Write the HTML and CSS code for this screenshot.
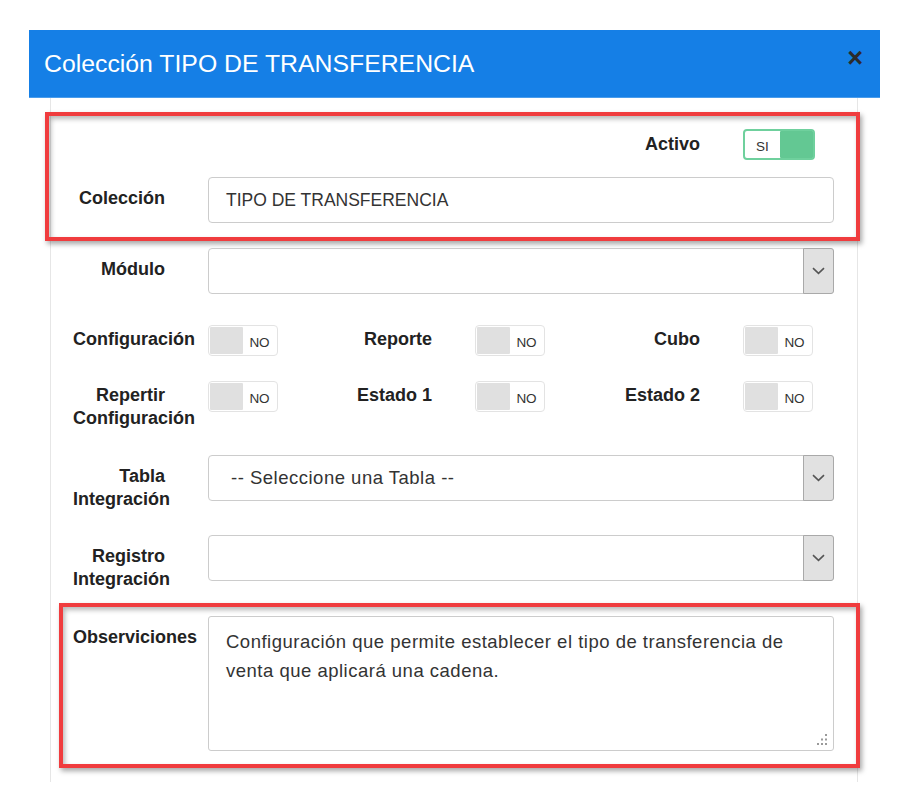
FILE: index.html
```html
<!DOCTYPE html>
<html lang="es">
<head>
<meta charset="utf-8">
<title>Colección TIPO DE TRANSFERENCIA</title>
<link rel="stylesheet" href="styles.css">
</head>
<body>
<div class="modal">
  <div class="modal-header">
    <h1 class="modal-title">Colección TIPO DE TRANSFERENCIA</h1>
    <span class="close">×</span>
  </div>
  <div class="modal-body">
    <div class="highlight highlight-top">
      <div class="toggle-row row-activo">
        <div class="cell"></div>
        <div class="cell"></div>
        <div class="cell">
          <label class="label label-toggle label-activo">Activo</label>
          <div class="toggle toggle-on"><span class="toggle-text">SI</span><span class="knob knob-on"></span></div>
        </div>
      </div>
      <div class="form-row row-coleccion">
        <label class="label">Colección</label>
        <div class="input">TIPO DE TRANSFERENCIA</div>
      </div>
    </div>

    <div class="form-row row-modulo">
      <label class="label">Módulo</label>
      <div class="input select">
        <span class="select-text"></span>
        <span class="select-arrow"><svg width="13" height="8" viewBox="0 0 13 8"><path d="M1 1.2 L6.5 6.4 L12 1.2" fill="none" stroke="#555" stroke-width="1.6"/></svg></span>
      </div>
    </div>

    <div class="toggle-row row-t1">
      <div class="cell">
        <label class="label label-toggle">Configuración</label>
        <div class="toggle"><span class="knob"></span><span class="toggle-text">NO</span></div>
      </div>
      <div class="cell">
        <label class="label label-toggle">Reporte</label>
        <div class="toggle"><span class="knob"></span><span class="toggle-text">NO</span></div>
      </div>
      <div class="cell">
        <label class="label label-toggle">Cubo</label>
        <div class="toggle"><span class="knob"></span><span class="toggle-text">NO</span></div>
      </div>
    </div>

    <div class="toggle-row row-t2">
      <div class="cell">
        <label class="label label-toggle">Repertir Configuración</label>
        <div class="toggle"><span class="knob"></span><span class="toggle-text">NO</span></div>
      </div>
      <div class="cell">
        <label class="label label-toggle">Estado 1</label>
        <div class="toggle"><span class="knob"></span><span class="toggle-text">NO</span></div>
      </div>
      <div class="cell">
        <label class="label label-toggle">Estado 2</label>
        <div class="toggle"><span class="knob"></span><span class="toggle-text">NO</span></div>
      </div>
    </div>

    <div class="form-row row-tabla">
      <label class="label">Tabla Integración</label>
      <div class="input select">
        <span class="select-text">-- Seleccione una Tabla --</span>
        <span class="select-arrow"><svg width="13" height="8" viewBox="0 0 13 8"><path d="M1 1.2 L6.5 6.4 L12 1.2" fill="none" stroke="#555" stroke-width="1.6"/></svg></span>
      </div>
    </div>

    <div class="form-row row-registro">
      <label class="label">Registro Integración</label>
      <div class="input select">
        <span class="select-text"></span>
        <span class="select-arrow"><svg width="13" height="8" viewBox="0 0 13 8"><path d="M1 1.2 L6.5 6.4 L12 1.2" fill="none" stroke="#555" stroke-width="1.6"/></svg></span>
      </div>
    </div>

    <div class="highlight highlight-bottom">
      <div class="form-row row-obs">
        <label class="label">Observiciones</label>
        <div class="textarea">Configuración que permite establecer el tipo de transferencia de<br>venta que aplicará una cadena.
          <svg class="grip" width="12" height="12" viewBox="0 0 12 12">
            <rect x="9" y="0" width="2" height="2" fill="#9a9a9a"/>
            <rect x="5" y="4.5" width="2" height="2" fill="#9a9a9a"/>
            <rect x="9" y="4.5" width="2" height="2" fill="#9a9a9a"/>
            <rect x="1" y="9" width="2" height="2" fill="#9a9a9a"/>
            <rect x="5" y="9" width="2" height="2" fill="#9a9a9a"/>
            <rect x="9" y="9" width="2" height="2" fill="#9a9a9a"/>
          </svg>
        </div>
      </div>
    </div>
  </div>
</div>
</body>
</html>
```

FILE: styles.css
```css
* { box-sizing: border-box; }

html, body {
  margin: 0;
  padding: 0;
  background: #ffffff;
  font-family: "Liberation Sans", Arial, sans-serif;
  color: #333;
}

.modal {
  margin: 30px 0 0 29px;
  width: 851px;
}

.modal-header {
  height: 68px;
  background: #157fe6;
  border-bottom: 1px solid #4a9ceb;
  display: flex;
  align-items: center;
  justify-content: space-between;
  padding: 0 17px 0 15px;
}

.modal-title {
  margin: 0;
  font-weight: normal;
  font-size: 24.8px;
  color: #ffffff;
  line-height: 1;
  padding-top: 1px;
}

.close {
  font-size: 27px;
  font-weight: bold;
  color: #2b2b2b;
  line-height: 1;
  margin-top: -10px;
}

.modal-body {
  margin-left: 21px;
  width: 808px;
  border-left: 1px solid #e6e6e6;
  border-right: 1px solid #e6e6e6;
  padding-top: 14px;
  padding-bottom: 14px;
}

.highlight {
  border: 4px solid #f03c3e;
  box-shadow: 2px 3px 5px rgba(0, 0, 0, 0.35), inset 2px 3px 5px rgba(0, 0, 0, 0.28);
}

.highlight-top {
  margin: 0 -3px 0 -6px;
  padding: 13px 0 14px 24px;
}

.highlight-bottom {
  margin: 12px -3px 0 8px;
  padding: 9px 0 13px 10px;
}

.form-row {
  display: grid;
  grid-template-columns: 92px 626px;
  column-gap: 43px;
  align-items: start;
  padding-left: 22px;
}

.highlight .form-row { padding-left: 0; }

.row-coleccion { margin-top: 17px; }
.row-modulo { margin-top: 7px; }
.row-tabla { margin-top: 25px; }
.row-registro { margin-top: 24px; }

.label {
  display: block;
  font-weight: bold;
  font-size: 18px;
  line-height: 23px;
  color: #222;
  text-align: right;
  padding-top: 10px;
}

.label-toggle { padding-top: 3px; }
.label-activo { padding-top: 4px; }

.input {
  height: 46px;
  border: 1px solid #cccccc;
  border-radius: 4px;
  font-size: 17.5px;
  color: #333;
  display: flex;
  align-items: center;
  padding-left: 17px;
}

.select {
  padding-left: 22px;
}

.select-text {
  flex: 1;
  font-size: 18.5px;
  letter-spacing: 0.5px;
}

.select-arrow {
  width: 31px;
  align-self: stretch;
  margin: -1px -1px -1px 0;
  background: #e1e1e1;
  border: 1px solid #a9a9a9;
  border-radius: 0 3px 3px 0;
  display: flex;
  align-items: center;
  justify-content: center;
}

.textarea {
  position: relative;
  height: 135px;
  border: 1px solid #cccccc;
  border-radius: 3px;
  font-size: 18.5px;
  letter-spacing: 0.5px;
  line-height: 29px;
  color: #333;
  padding: 10px 0 0 17px;
  white-space: nowrap;
}

.grip {
  position: absolute;
  right: 5px;
  bottom: 4px;
}

.toggle-row {
  display: grid;
  grid-template-columns: 267px 268px 1fr;
  padding-left: 22px;
}

.highlight .toggle-row { padding-left: 0; }

.row-t1 { margin-top: 31px; }
.row-t2 { margin-top: 25px; }

.cell {
  display: grid;
  grid-template-columns: 92px 70px;
  column-gap: 43px;
  align-items: start;
}

.toggle {
  width: 70px;
  height: 31px;
  border: 1px solid #e3e3e3;
  border-radius: 4px;
  padding: 1px;
  display: flex;
  align-items: stretch;
  background: #fff;
}

.knob {
  width: 33px;
  background: #e0e0e0;
  border-radius: 1px;
}

.toggle-text {
  flex: 1;
  display: flex;
  align-items: center;
  justify-content: center;
  font-size: 13.5px;
  color: #333;
  padding-top: 3px;
}

.toggle-on {
  width: 72px;
  border: 2px solid #6fd09d;
  padding: 0;
}

.toggle-on .toggle-text {
  justify-content: flex-start;
  padding-left: 11px;
}

.knob-on {
  width: 33px;
  background: #63c893;
}
```
